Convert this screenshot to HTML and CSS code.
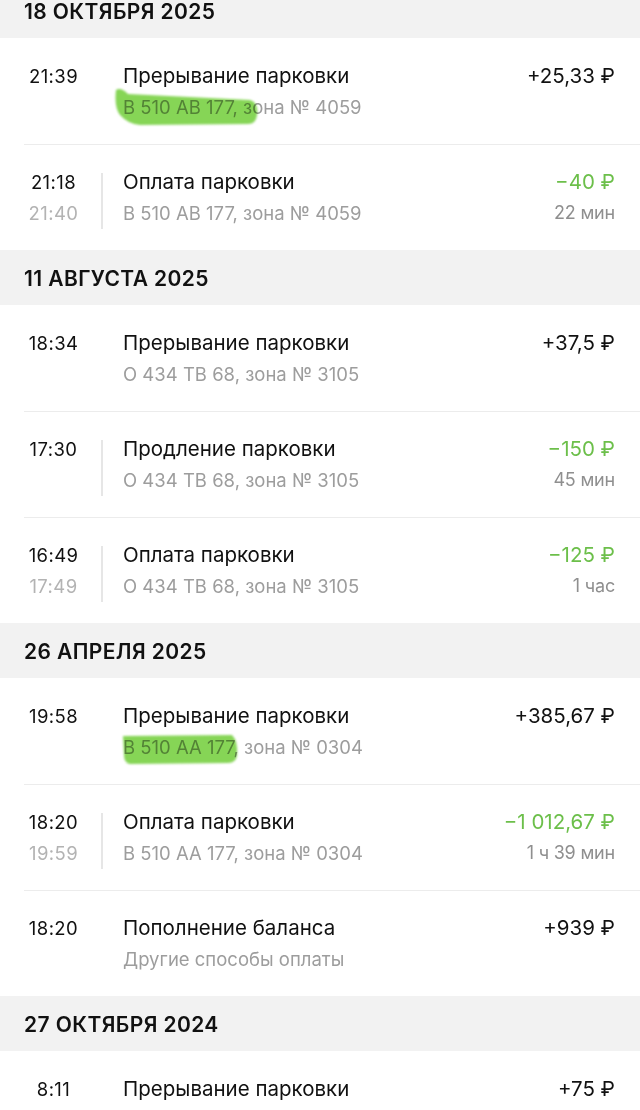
FILE: index.html
```html
<!DOCTYPE html>
<html lang="ru">
<head>
<meta charset="utf-8">
<link rel="stylesheet" href="styles.css">
</head>
<body>
<div class="page">

  <section class="group">
    <div class="date">18 ОКТЯБРЯ 2025</div>
    <div class="row">
      <div class="times"><div class="t">21:39</div></div>
      <div class="info">
        <div class="title">Прерывание парковки</div>
        <div class="sub"><span class="hlwrap"><svg class="hl hl1" width="160" height="42" viewBox="0 0 160 42"><path d="M3,3 Q8,0 15,7 L137,13 Q146,16 144,28 Q143,37 135,37 L27,38 Q15,37 7,28 Q1,20 3,3 Z"/></svg>В 510 АВ 177</span>, зона № 4059</div>
      </div>
      <div class="amt"><div class="sum">+25,33 ₽</div></div>
    </div>
    <div class="row">
      <div class="times split"><div class="t">21:18</div><div class="t2">21:40</div></div>
      <div class="info">
        <div class="title">Оплата парковки</div>
        <div class="sub">В 510 АВ 177, зона № 4059</div>
      </div>
      <div class="amt"><div class="sum neg">−40 ₽</div><div class="dur">22 мин</div></div>
    </div>
  </section>

  <section class="group">
    <div class="date">11 АВГУСТА 2025</div>
    <div class="row">
      <div class="times"><div class="t">18:34</div></div>
      <div class="info">
        <div class="title">Прерывание парковки</div>
        <div class="sub">О 434 ТВ 68, зона № 3105</div>
      </div>
      <div class="amt"><div class="sum">+37,5 ₽</div></div>
    </div>
    <div class="row">
      <div class="times split"><div class="t">17:30</div></div>
      <div class="info">
        <div class="title">Продление парковки</div>
        <div class="sub">О 434 ТВ 68, зона № 3105</div>
      </div>
      <div class="amt"><div class="sum neg">−150 ₽</div><div class="dur">45 мин</div></div>
    </div>
    <div class="row">
      <div class="times split"><div class="t">16:49</div><div class="t2">17:49</div></div>
      <div class="info">
        <div class="title">Оплата парковки</div>
        <div class="sub">О 434 ТВ 68, зона № 3105</div>
      </div>
      <div class="amt"><div class="sum neg">−125 ₽</div><div class="dur">1 час</div></div>
    </div>
  </section>

  <section class="group">
    <div class="date">26 АПРЕЛЯ 2025</div>
    <div class="row">
      <div class="times"><div class="t">19:58</div></div>
      <div class="info">
        <div class="title">Прерывание парковки</div>
        <div class="sub"><span class="hlwrap"><svg class="hl hl2" width="160" height="42" viewBox="0 0 160 42"><path d="M10,9 L119,8 Q125,14 124,28 Q123,36 115,36 L17,37 Q11,36 11,28 Z"/></svg>В 510 АА 177</span>, зона № 0304</div>
      </div>
      <div class="amt"><div class="sum">+385,67 ₽</div></div>
    </div>
    <div class="row">
      <div class="times split"><div class="t">18:20</div><div class="t2">19:59</div></div>
      <div class="info">
        <div class="title">Оплата парковки</div>
        <div class="sub">В 510 АА 177, зона № 0304</div>
      </div>
      <div class="amt"><div class="sum neg">−1 012,67 ₽</div><div class="dur">1 ч 39 мин</div></div>
    </div>
    <div class="row">
      <div class="times"><div class="t">18:20</div></div>
      <div class="info">
        <div class="title">Пополнение баланса</div>
        <div class="sub">Другие способы оплаты</div>
      </div>
      <div class="amt"><div class="sum">+939 ₽</div></div>
    </div>
  </section>

  <section class="group">
    <div class="date">27 ОКТЯБРЯ 2024</div>
    <div class="row">
      <div class="times"><div class="t">8:11</div></div>
      <div class="info">
        <div class="title">Прерывание парковки</div>
        <div class="sub">О 434 ТВ 68, зона № 3105</div>
      </div>
      <div class="amt"><div class="sum">+75 ₽</div></div>
    </div>
  </section>

</div>
</body>
</html>
```

FILE: styles.css
```css
html, body {
  margin: 0;
  padding: 0;
  background: #ffffff;
}
body {
  font-family: Inter, Roboto, "Liberation Sans", sans-serif;
  color: #111111;
  overflow: hidden;
  height: 1110px;
}
.page {
  margin-top: -17px;
}
.date {
  height: 55px;
  box-sizing: border-box;
  padding: 2px 0 0 24px;
  display: flex;
  align-items: center;
  background: #f2f2f2;
  font-size: 21px;
  font-weight: 600;
  letter-spacing: 0.4px;
  color: #111;
}
.row {
  margin-left: 24px;
  padding: 22px 25px 21px 0;
  border-top: 1px solid #ececec;
  display: grid;
  grid-template-columns: 59px 1fr auto;
  column-gap: 40px;
  height: 106px;
  box-sizing: border-box;
}
.date + .row {
  border-top-color: transparent;
}
.times {
  text-align: center;
  position: relative;
  font-size: 18.5px;
  letter-spacing: 0.4px;
}
.times.split::after {
  content: "";
  position: absolute;
  right: -20px;
  top: 6px;
  height: 56px;
  width: 2px;
  background: #e6e6e6;
}
.t {
  line-height: 30px;
  color: #111;
}
.t2 {
  line-height: 32px;
  color: #b3b3b3;
}
.info {
  min-width: 0;
}
.title {
  font-size: 20.5px;
  line-height: 30px;
  color: #111;
}
.sub {
  font-size: 18.5px;
  line-height: 32px;
  color: #9d9d9d;
}
.hlwrap {
  position: relative;
}
.hl {
  position: absolute;
  left: -10px;
  top: -9px;
  pointer-events: none;
  filter: blur(0.8px);
  mix-blend-mode: multiply;
}
.hl path {
  fill: #86d556;
}
.amt {
  text-align: right;
}
.sum {
  font-size: 20.5px;
  line-height: 30px;
  color: #111;
}
.sum.neg {
  color: #6cbf4a;
}
.dur {
  font-size: 18px;
  line-height: 32px;
  letter-spacing: -0.2px;
  color: #8f8f8f;
}
```
